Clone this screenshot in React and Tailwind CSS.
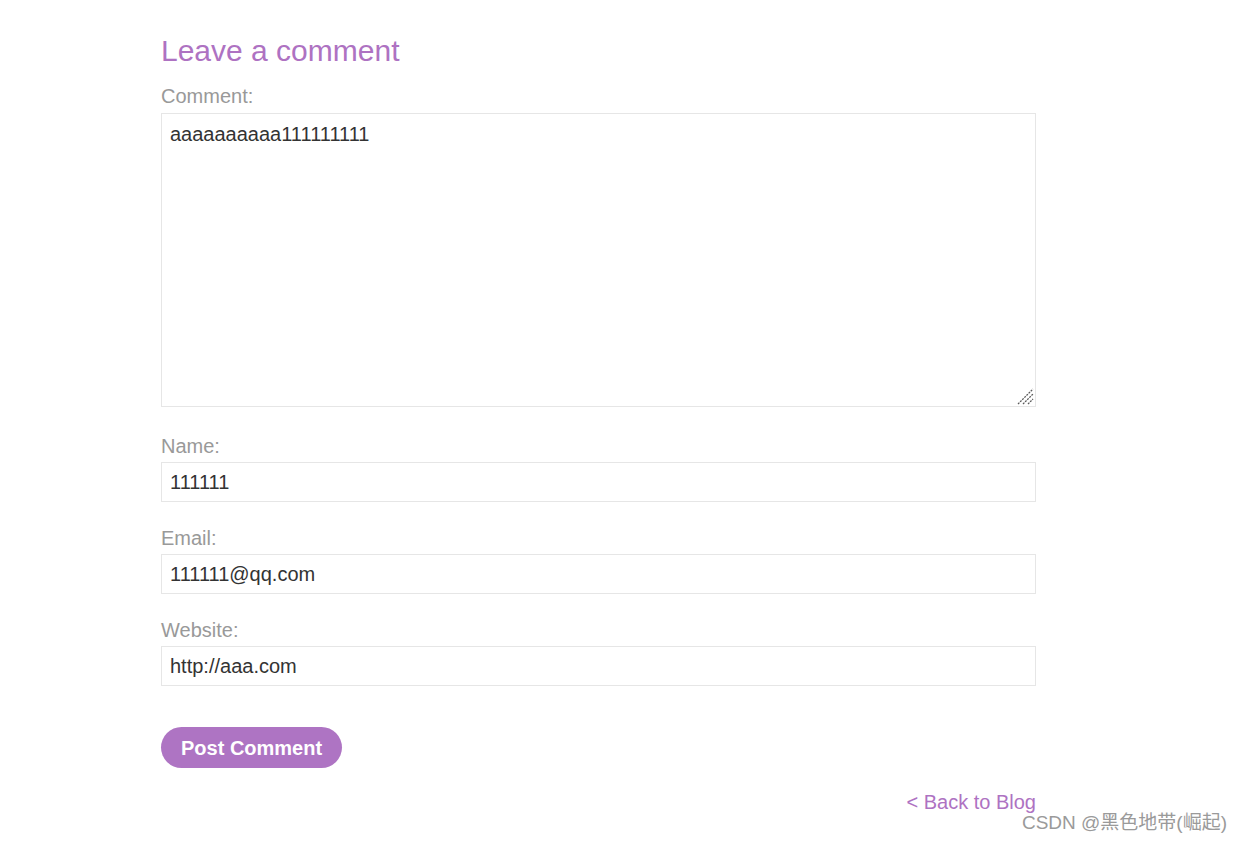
import { useState } from "react";

const FIELDS = [
  { id: "name", label: "Name:", gap: "mt-[27px]" },
  { id: "email", label: "Email:", gap: "mt-[24px]" },
  { id: "website", label: "Website:", gap: "mt-[24px]" },
];

function Field({ field, value, onChange }) {
  return (
    <div className={field.gap}>
      <label htmlFor={field.id} className="block text-[20px] leading-[24px] text-[#999999]">
        {field.label}
      </label>
      <input
        id={field.id}
        type="text"
        value={value}
        onChange={(e) => onChange(field.id, e.target.value)}
        className="mt-[4px] block w-full h-[40px] px-[8px] border border-[#e6e6e6] bg-white
        text-[20px] text-[#333333] outline-none"
      />
    </div>
  );
}

export default function App() {
  const [comment, setComment] = useState("aaaaaaaaaa111111111");
  const [values, setValues] = useState({
    name: "111111",
    email: "111111@qq.com",
    website: "http://aaa.com",
  });

  const handleChange = (id, value) => setValues((prev) => ({ ...prev, [id]: value }));

  return (
    <div className="relative min-h-[843px] bg-white font-['Liberation_Sans',Arial,sans-serif]">
      <div className="ml-[161px] w-[875px] pt-[33px]">
        <h1 className="text-[30px] leading-[36px] text-[#ae72c2]">Leave a comment</h1>

        {/* Comment box */}
        <label htmlFor="comment" className="mt-[15px] block text-[20px] leading-[24px] text-[#999999]">
          Comment:
        </label>
        <div className="relative mt-[5px]">
          <textarea
            id="comment"
            value={comment}
            onChange={(e) => setComment(e.target.value)}
            className="block w-full h-[294px] px-[8px] py-[8px] border border-[#e6e6e6] bg-white resize-none
            text-[20px] leading-[24px] text-[#333333] outline-none"
          />
          {/* resize grip */}
          <svg
            className="absolute right-[2px] bottom-[2px] pointer-events-none"
            width="18"
            height="18"
            viewBox="0 0 18 18"
          >
            <path
              d="M2 17 L17 2 M7 17 L17 7 M12 17 L17 12"
              stroke="#5a5a5a"
              strokeWidth="1.3"
              strokeDasharray="2 1"
            />
          </svg>
        </div>

        {FIELDS.map((f) => (
          <Field key={f.id} field={f} value={values[f.id]} onChange={handleChange} />
        ))}

        <button
          type="button"
          className="mt-[41px] h-[41px] px-[20px] rounded-full bg-[#ae74c3] text-white text-[20px] font-bold leading-[24px]"
        >
          Post Comment
        </button>

        <div className="mt-[22px] text-right">
          <a href="#" className="text-[20px] leading-[24px] text-[#ae72c2]">
            &lt; Back to Blog
          </a>
        </div>
      </div>

      {/* watermark */}
      <div className="absolute right-[14px] top-[811px] text-[19px] leading-[24px] text-[#9a9a9a]
      font-['Liberation_Sans','Noto_Sans_CJK_SC',sans-serif]">
        CSDN @黑色地带(崛起)
      </div>
    </div>
  );
}
